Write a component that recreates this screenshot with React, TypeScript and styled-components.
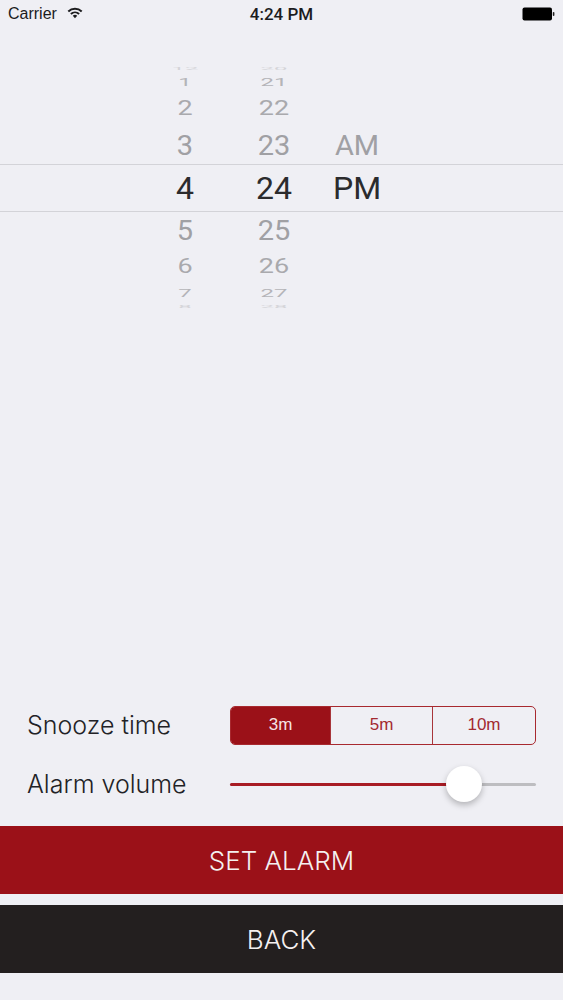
import React from 'react';
import styled, {createGlobalStyle} from "styled-components";

const GlobalStyle = createGlobalStyle`
    html, body {
        margin: 0;
        padding: 0;
        background-color: #efeff4;
    }
    * {
        box-sizing: border-box;
    }
`

type Row = {
    hour: string
    minute: string
    meridiem?: string
    height: number
    size: number
    squash: number
    color: string
    selected?: boolean
}

const rows: Row[] = [
    {hour: "12", minute: "20", height: 9, size: 24, squash: 0.12, color: "#d4d4d8"},
    {hour: "1", minute: "21", height: 17, size: 24, squash: 0.45, color: "#b4b4b8"},
    {hour: "2", minute: "22", height: 36, size: 27, squash: 0.75, color: "#a9a9ad"},
    {hour: "3", minute: "23", meridiem: "AM", height: 38, size: 29, squash: 0.95, color: "#a0a0a4"},
    {hour: "4", minute: "24", meridiem: "PM", height: 48, size: 32, squash: 1, color: "#2b2b2d", selected: true},
    {hour: "5", minute: "25", height: 37, size: 29, squash: 0.95, color: "#a0a0a4"},
    {hour: "6", minute: "26", height: 34, size: 27, squash: 0.75, color: "#a9a9ad"},
    {hour: "7", minute: "27", height: 20, size: 24, squash: 0.45, color: "#b4b4b8"},
    {hour: "8", minute: "28", height: 8, size: 24, squash: 0.12, color: "#d4d4d8"},
]

const WifiIcon = () => (
    <svg width="16" height="13" viewBox="0 0 16 12">
        <path d="M0.6 4.2 A10.6 10.6 0 0 1 15.4 4.2 L14 5.7 A8.6 8.6 0 0 0 2 5.7 Z" fill="#1c1c1e"/>
        <path d="M3.2 6.8 A7 7 0 0 1 12.8 6.8 L11.4 8.2 A5 5 0 0 0 4.6 8.2 Z" fill="#1c1c1e"/>
        <path d="M5.8 9.3 A3.2 3.2 0 0 1 10.2 9.3 L8 11.7 Z" fill="#1c1c1e"/>
    </svg>
)

const BatteryIcon = () => (
    <svg width="33" height="14" viewBox="0 0 33 14">
        <rect x="0.5" y="0.5" width="29.5" height="13" rx="2" fill="#000"/>
        <rect x="30.8" y="5" width="1.6" height="4" rx="0.8" fill="#222"/>
    </svg>
)

const App = () => {
    return (
        <Page>
            <GlobalStyle/>
            <StatusBar>
                <StatusLeft>
                    Carrier
                    <WifiIcon/>
                </StatusLeft>
                <StatusTime>4:24 PM</StatusTime>
                <StatusRight>
                    <BatteryIcon/>
                </StatusRight>
            </StatusBar>

            <Picker>
                {rows.map(row => (
                    <PickerRow key={row.hour} $height={row.height} $selected={row.selected}>
                        <PickerCell $size={row.size} $squash={row.squash} $color={row.color}>{row.hour}</PickerCell>
                        <PickerCell $size={row.size} $squash={row.squash} $color={row.color}>{row.minute}</PickerCell>
                        <PickerCell $size={row.size} $squash={row.squash} $color={row.color}>{row.meridiem}</PickerCell>
                    </PickerRow>
                ))}
            </Picker>

            <Controls>
                <ControlRow>
                    <ControlLabel>Snooze time</ControlLabel>
                    <Segments>
                        <Segment $active>3m</Segment>
                        <Segment>5m</Segment>
                        <Segment>10m</Segment>
                    </Segments>
                </ControlRow>
                <ControlRow>
                    <ControlLabel>Alarm volume</ControlLabel>
                    <Slider>
                        <SliderFill $value={76.5}/>
                        <SliderThumb $value={76.5}/>
                    </Slider>
                </ControlRow>
            </Controls>

            <Buttons>
                <ActionButton $color="#9b1118">SET ALARM</ActionButton>
                <ActionButton $color="#231f1f">BACK</ActionButton>
            </Buttons>
        </Page>
    );
};

export default App;

const Page = styled.div`
    width: 563px;
    height: 1000px;
    background-color: #efeff4;
    display: flex;
    flex-direction: column;
    padding-bottom: 27px;
    overflow: hidden;
    font-family: "Liberation Sans", Arial, sans-serif;
`

const StatusBar = styled.div`
    height: 28px;
    padding: 0 8px;
    display: grid;
    grid-template-columns: 1fr auto 1fr;
    align-items: center;
    font-size: 16px;
    color: #1c1c1e;
`

const StatusLeft = styled.div`
    display: flex;
    align-items: center;
    gap: 10px;

    svg {
        margin-top: -3px;
    }
`

const StatusTime = styled.div`
    font-family: "Roboto", "Liberation Sans", sans-serif;
    font-weight: 500;
    font-size: 17px;
`

const StatusRight = styled.div`
    display: flex;
    justify-content: flex-end;
`

const Picker = styled.div`
    margin-top: 36px;
    display: flex;
    flex-direction: column;
    font-family: "Roboto", "Liberation Sans", sans-serif;
    font-weight: 400;
`

const PickerRow = styled.div<{$height: number; $selected?: boolean}>`
    height: ${props => props.$height}px;
    display: grid;
    grid-template-columns: 60px 48px 48px;
    grid-template-rows: minmax(0, 1fr);
    justify-content: start;
    padding-left: 155px;
    column-gap: 35px;
    align-items: center;
    justify-items: center;
    border-top: ${props => props.$selected ? "1.5px solid #d3d3d8" : "none"};
    border-bottom: ${props => props.$selected ? "1.5px solid #d3d3d8" : "none"};
`

const PickerCell = styled.div<{$size: number; $squash: number; $color: string}>`
    font-size: ${props => props.$size}px;
    line-height: 1;
    color: ${props => props.$color};
    transform: scaleY(${props => props.$squash});
    white-space: nowrap;
`

const Controls = styled.div`
    margin-top: auto;
    padding: 0 27px;
    display: flex;
    flex-direction: column;
    gap: 19.5px;
    margin-bottom: 23px;
`

const ControlRow = styled.div`
    height: 39px;
    display: grid;
    grid-template-columns: 203px 306px;
    align-items: center;
`

const ControlLabel = styled.div`
    font-family: "Inter", "Liberation Sans", sans-serif;
    font-weight: 300;
    font-size: 25px;
    color: #222226;
`

const Segments = styled.div`
    height: 39px;
    display: grid;
    grid-template-columns: 99px 102px 1fr;
    border: 1.5px solid #a8292f;
    border-radius: 5px;
    overflow: hidden;
`

const Segment = styled.div<{$active?: boolean}>`
    display: flex;
    align-items: center;
    justify-content: center;
    font-size: 17px;
    color: ${props => props.$active ? "#f5e4e4" : "#a32a30"};
    background-color: ${props => props.$active ? "#9b1118" : "transparent"};
    border-left: ${props => props.$active ? "none" : "1.5px solid #a8353a"};
`

const Slider = styled.div`
    position: relative;
    height: 3px;
    margin-top: 1px;
    background-color: #bdbdc0;
    border-radius: 2px;
`

const SliderFill = styled.div<{$value: number}>`
    width: ${props => props.$value}%;
    height: 100%;
    background-color: #a81c24;
    border-radius: 2px;
`

const SliderThumb = styled.div<{$value: number}>`
    position: absolute;
    top: -17px;
    left: ${props => props.$value}%;
    width: 36px;
    height: 36px;
    margin-left: -18px;
    border-radius: 50%;
    background-color: #fff;
    box-shadow: 0 3px 6px rgba(0, 0, 0, 0.25);
`

const Buttons = styled.div`
    display: flex;
    flex-direction: column;
    gap: 11px;
`

const ActionButton = styled.div<{$color: string}>`
    height: 68px;
    display: flex;
    align-items: center;
    justify-content: center;
    background-color: ${props => props.$color};
    color: #f4f0f0;
    font-family: "Inter", "Liberation Sans", sans-serif;
    font-weight: 300;
    font-size: 26px;
`
